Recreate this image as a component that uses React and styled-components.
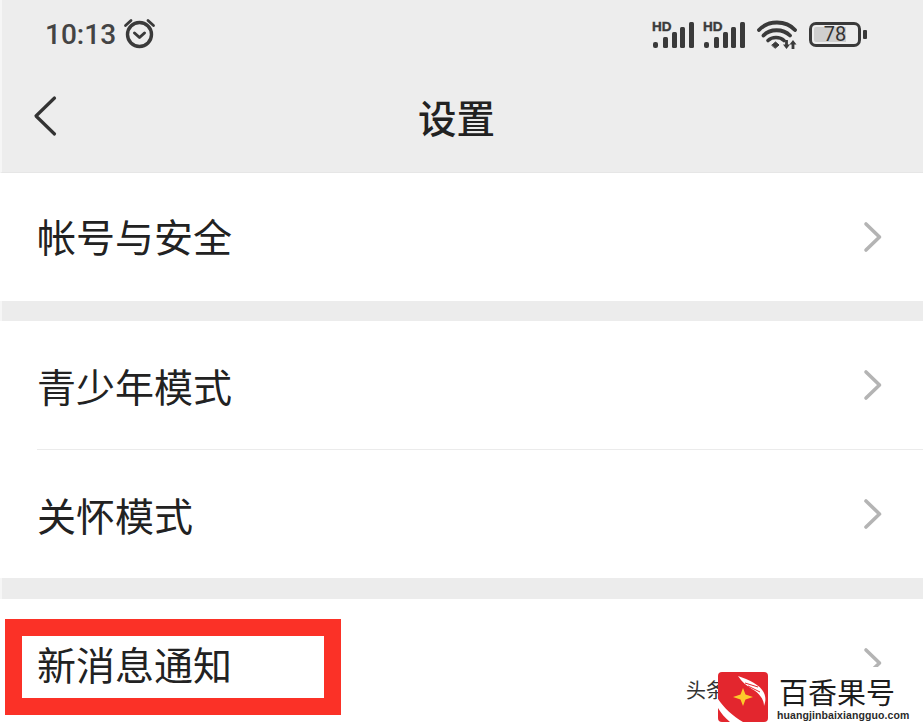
import React from 'react';
import styled, { createGlobalStyle } from 'styled-components';

const GlobalStyle = createGlobalStyle`
  html, body {
    margin: 0;
    padding: 0;
    background: #fff;
  }
`;

const Page = styled.div`
  position: relative;
  width: 923px;
  height: 727px;
  overflow: hidden;
  background: #fff;
  font-family: "Noto Sans CJK SC", "Noto Sans", sans-serif;
  color: #1f1f1f;
`;

const Header = styled.header`
  height: 172px;
  background: #ededed;
  border-left: 2px solid #f6f6f6;
  border-bottom: 1px solid #e6e6e6;
`;

const StatusBar = styled.div`
  height: 68px;
  display: flex;
  align-items: center;
  justify-content: space-between;
  padding: 0 56px 0 43px;
`;

const StatusGroup = styled.div`
  display: flex;
  align-items: center;
  gap: ${props => props.gap || 0}px;
`;

const Time = styled.span`
  font-family: Roboto, sans-serif;
  font-size: 28px;
  font-weight: 500;
  color: #444;
`;

const NavBar = styled.div`
  position: relative;
  height: 104px;
  display: flex;
  align-items: center;
  justify-content: center;
  padding-bottom: 8px;
  box-sizing: border-box;
`;

const BackButton = styled.div`
  position: absolute;
  left: 29px;
  top: 26px;
  display: flex;
`;

const Title = styled.h1`
  margin: 0 0 0 -12px;
  font-size: 38.5px;
  font-weight: 500;
  line-height: 1;
  color: #222;
`;

const Gap = styled.div`
  height: ${props => props.h}px;
  background: #ececec;
  border-left: 2px solid #f6f6f6;
`;

const Row = styled.div`
  height: 128px;
  display: flex;
  align-items: center;
  justify-content: space-between;
  padding: 0 40px 0 37px;
  background: #fff;
`;

const RowLabel = styled.span`
  font-size: 39px;
  line-height: 1;
  color: #222;
  margin-top: ${props => props.lift ? -3 : 0}px;
`;

const RowArrow = styled.span`
  display: flex;
`;

const Divider = styled.div`
  height: 1px;
  margin-left: 37px;
  background: #ebebeb;
`;

const Highlight = styled.div`
  position: absolute;
  left: 5px;
  top: 619px;
  width: 302px;
  height: 62px;
  border: 17px solid #fb3127;
`;

const Watermark = styled.div`
  position: absolute;
  left: 686px;
  top: 667px;
  width: 237px;
  height: 60px;
  padding-top: 5px;
  box-sizing: border-box;
  display: flex;
  align-items: flex-start;
  background: linear-gradient(to right, rgba(255,255,255,0) 0, #fff 12%);
`;

const FaintText = styled.span`
  font-size: 20px;
  line-height: 1;
  color: #333;
  margin-top: 8px;
  margin-right: -8px;
  white-space: nowrap;
`;

const BrandBlock = styled.div`
  margin-left: 11px;
  margin-top: 3px;
  display: flex;
  flex-direction: column;
  align-items: flex-start;
`;

const BrandName = styled.span`
  font-size: 29px;
  line-height: 33px;
  color: #1c1c1c;
`;

const BrandUrl = styled.span`
  margin-left: -2px;
  font-family: "Liberation Sans", sans-serif;
  font-size: 10.5px;
  font-weight: 700;
  line-height: 14px;
  letter-spacing: 0.1px;
  color: #2a2a2a;
`;

const AlarmSvg = styled.svg`
  margin-left: 6px;
  margin-top: -2px;
`;

const AlarmIcon = () => (
  <AlarmSvg width="34" height="34" viewBox="0 0 34 34" fill="none" stroke="#3a3a3a" strokeLinecap="round">
    <circle cx="17.5" cy="18.5" r="12" strokeWidth="3.4" />
    <path d="M12.5 17l5 4.5 5-4.5" strokeWidth="3" strokeLinejoin="round" />
    <path d="M3.5 9.5 9 4.5M31.5 9.5 26 4.5" strokeWidth="2.8" />
  </AlarmSvg>
);

const SignalIcon = () => (
  <svg width="42" height="30" viewBox="0 0 42 30">
    <text x="0" y="12" fontFamily="Liberation Sans, sans-serif" fontSize="13.5" fontWeight="700" fill="#3a3a3a" stroke="#3a3a3a" strokeWidth="0.4">HD</text>
    <g fill="#3a3a3a">
      <rect x="1" y="23" width="5" height="6" rx="2" />
      <rect x="11" y="18" width="5" height="11" rx="1.5" />
      <rect x="20" y="13" width="5" height="16" rx="1.5" />
      <rect x="28" y="8" width="5" height="21" rx="1.5" />
      <rect x="37" y="3" width="5" height="26" rx="1.5" />
    </g>
  </svg>
);

const WifiSvg = styled.svg`
  margin-left: 3px;
`;

const WifiIcon = () => (
  <WifiSvg width="40" height="30" viewBox="0 -1 40 30" fill="none" stroke="#3a3a3a" strokeLinecap="round">
    <path d="M2 10C11 0 29 0 38 10" strokeWidth="3.8" />
    <path d="M6.5 15.5C13 8.5 26 8.5 33 15.5" strokeWidth="3.8" />
    <path d="M11 20.5C15 16.5 23 16.5 27 20.5" strokeWidth="3.6" />
    <path d="M15 25 18.5 22 22 25 18.5 28Z" fill="#3a3a3a" strokeWidth="1" strokeLinejoin="round" />
    <path d="M29.5 20V26M36 23V29" strokeWidth="2.8" strokeLinecap="butt" />
    <path d="M26 24.5 29.5 29 33 24.5ZM32.5 24.5 36 20 39.5 24.5Z" fill="#3a3a3a" stroke="none" />
  </WifiSvg>
);

const Battery = styled.div`
  position: relative;
  width: 52px;
  height: 25px;
  box-sizing: border-box;
  border: 3px solid #3a3a3a;
  border-radius: 7px;
  margin-left: 3px;
  margin-right: 6px;
  display: flex;
  align-items: center;
  justify-content: center;
  font-family: Roboto, sans-serif;
  font-size: 20px;
  color: #333;
  &::before {
    content: '';
    position: absolute;
    left: 2px;
    top: 2px;
    bottom: 2px;
    width: 70%;
    background: #cfcfcf;
    border-radius: 2px 0 0 2px;
  }
  &::after {
    content: '';
    position: absolute;
    right: -9px;
    top: 5px;
    width: 4px;
    height: 9px;
    background: #3a3a3a;
    border-radius: 1px;
  }
`;

const BatteryValue = styled.span`
  position: relative;
  line-height: 1;
`;

const BackIcon = () => (
  <svg width="28" height="44" viewBox="0 0 28 44" fill="none" stroke="#333" strokeWidth="3.2" strokeLinecap="round" strokeLinejoin="round">
    <path d="M23.5 4 5 22 23.5 40" />
  </svg>
);

const Chevron = () => (
  <RowArrow>
    <svg width="20" height="32" viewBox="0 0 20 32" fill="none" stroke="#b4b4b4" strokeWidth="3.6" strokeLinecap="round" strokeLinejoin="round">
      <path d="M3 3 16.5 16 3 29" />
    </svg>
  </RowArrow>
);

const LogoSvg = styled.svg`
  position: relative;
  flex: none;
`;

const LogoMark = () => (
  <LogoSvg width="50" height="50" viewBox="0 0 50 50">
    <rect width="50" height="50" rx="4" fill="#e3262e" />
    <path d="M20 4C32 8 45 14 47 24C48 28 47 31 46 34C46 27 41 21 34 17C29 14 24 10 20 4Z" fill="#fff" />
    <path d="M27 11 40 15M30 14 42 20" stroke="#e3262e" strokeWidth="1" />
    <path d="M0 27C6 36 15 44 25 50L12 50C7 46 3 41 0 36Z" fill="#fff" />
    <path d="M25 16 27.5 22.5 35 25 27.5 27.5 25 34 22.5 27.5 15 25 22.5 22.5Z" fill="#fdc92b" />
  </LogoSvg>
);

const App = () => (
  <Page>
    <GlobalStyle />
    <Header>
      <StatusBar>
        <StatusGroup>
          <Time>10:13</Time>
          <AlarmIcon />
        </StatusGroup>
        <StatusGroup gap={9}>
          <SignalIcon />
          <SignalIcon />
          <WifiIcon />
          <Battery><BatteryValue>78</BatteryValue></Battery>
        </StatusGroup>
      </StatusBar>
      <NavBar>
        <BackButton><BackIcon /></BackButton>
        <Title>设置</Title>
      </NavBar>
    </Header>
    <Row>
      <RowLabel lift>帐号与安全</RowLabel>
      <Chevron />
    </Row>
    <Gap h={20} />
    <Row>
      <RowLabel>青少年模式</RowLabel>
      <Chevron />
    </Row>
    <Divider />
    <Row>
      <RowLabel>关怀模式</RowLabel>
      <Chevron />
    </Row>
    <Gap h={21} />
    <Row>
      <RowLabel>新消息通知</RowLabel>
      <Chevron />
    </Row>
    <Highlight />
    <Watermark>
      <FaintText>头条</FaintText>
      <LogoMark />
      <BrandBlock>
        <BrandName>百香果号</BrandName>
        <BrandUrl>huangjinbaixiangguo.com</BrandUrl>
      </BrandBlock>
    </Watermark>
  </Page>
);

export default App;
